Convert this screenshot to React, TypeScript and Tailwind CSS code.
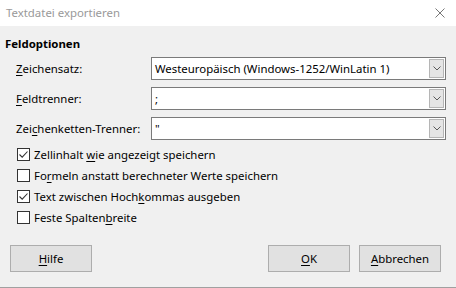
import type { ReactNode } from "react";

const font = { fontFamily: '"Noto Sans", "Segoe UI", Arial, sans-serif' };

function U({ children }: { children: ReactNode }) {
  return <span className="underline underline-offset-2">{children}</span>;
}

function Combo({ value }: { value: string }) {
  return (
    <div className="flex h-[23px] w-[295px] border border-[#7a7a7a] bg-white">
      <div className="flex min-w-0 flex-1 items-center pl-[3px] text-[11.4px] text-black">{value}</div>
      <div className="m-[1px] flex w-[15px] items-center justify-center border border-[#b5b5b5] bg-[#e5e5e5]">
        <svg width="8" height="5" viewBox="0 0 8 5">
          <path d="M0.5 0.5 L4 4 L7.5 0.5" fill="none" stroke="#5a5a5a" strokeWidth="1" />
        </svg>
      </div>
    </div>
  );
}

function Check({ checked, children }: { checked: boolean; children: ReactNode }) {
  return (
    <div className="flex h-[21px] items-center pl-[17px]">
      <div className="flex h-[13px] w-[13px] items-center justify-center border border-[#333333] bg-white">
        {checked ? (
          <svg width="11" height="11" viewBox="0 0 11 11">
            <path d="M1.5 5.5 L4.2 8.2 L9.5 2.5" fill="none" stroke="#333333" strokeWidth="1.1" />
          </svg>
        ) : null}
      </div>
      <span className="ml-[4px] text-[11.4px] text-black">{children}</span>
    </div>
  );
}

function Button({ children }: { children: ReactNode }) {
  return (
    <div className="flex h-[27px] w-[82px] items-center justify-center border border-[#adadad] bg-[#e1e1e1] text-[11.4px] text-black">
      {children}
    </div>
  );
}

export default function App() {
  const rows: { label: ReactNode; value: string }[] = [
    { label: <><U>Z</U>eichensatz:</>, value: "Westeuropäisch (Windows-1252/WinLatin 1)" },
    { label: <><U>F</U>eldtrenner:</>, value: ";" },
    { label: <>Zei<U>c</U>henketten-Trenner:</>, value: '"' },
  ];

  return (
    <div className="flex h-[288px] w-[456px] flex-col bg-[#f0f0f0]" style={font}>
      <div className="flex h-[26px] items-center justify-between bg-white pl-[6px] pr-[11px]">
        <span className="text-[11.4px] text-[#999999]">Textdatei exportieren</span>
        <svg width="10" height="10" viewBox="0 0 10 10">
          <path d="M0.5 0.5 L9.5 9.5 M9.5 0.5 L0.5 9.5" stroke="#777777" strokeWidth="1" />
        </svg>
      </div>

      <div className="mt-[9px] px-[5px] text-[11.4px] font-bold text-black">Feldoptionen</div>

      <div className="mt-[5px] flex flex-col gap-[7px]">
        {rows.map((r, i) => (
          <div key={i} className="flex items-center">
            <div className="w-[151px] pl-[16px] text-[11.4px] text-black">{r.label}</div>
            <Combo value={r.value} />
          </div>
        ))}
      </div>

      <div className="mt-[4px] flex flex-col">
        <Check checked>Zellinhalt <U>w</U>ie angezeigt speichern</Check>
        <Check checked={false}>Fo<U>r</U>meln anstatt berechneter Werte speichern</Check>
        <Check checked>Text zwischen Hoch<U>k</U>ommas ausgeben</Check>
        <Check checked={false}>Feste Spalten<U>b</U>reite</Check>
      </div>

      <div className="mt-[17px] flex px-[10px]">
        <Button><U>H</U>ilfe</Button>
        <div className="flex-1" />
        <Button><U>O</U>K</Button>
        <div className="w-[9px]" />
        <Button><U>A</U>bbrechen</Button>
        <div className="w-[5px]" />
      </div>
      <div className="flex-1" />
      <div className="h-[1px] bg-[#a0a0a0]" />
    </div>
  );
}
